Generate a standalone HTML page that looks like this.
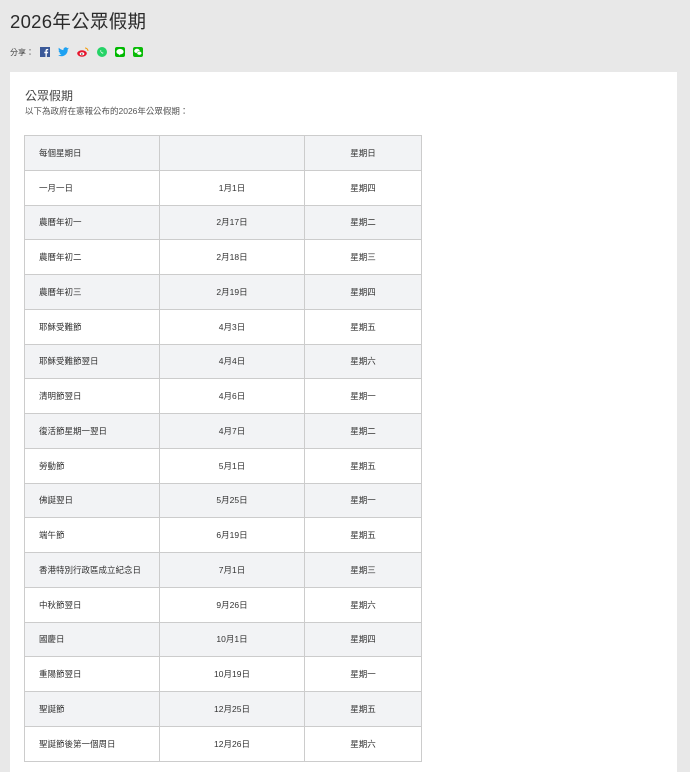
<!DOCTYPE html>
<html><head><meta charset="utf-8"><style>
*{margin:0;padding:0;box-sizing:border-box}
html,body{width:690px;height:763px;overflow:hidden;background:#e8e8e8;font-family:"Liberation Sans","Noto Sans CJK TC",sans-serif;color:#333}
h1{position:absolute;left:10px;top:8px;font-size:18.5px;font-weight:normal;color:#2a2a2a;letter-spacing:0.3px}
.share{position:absolute;left:10px;top:46px;font-size:8px;color:#444;display:flex;align-items:center;height:12px}
.share svg{margin-left:8px;display:block}
.card{position:absolute;left:10px;top:72px;width:667px;height:700px;background:#fff}
.h2{position:absolute;left:25px;top:87px;font-size:12px;color:#444}
.sub{position:absolute;left:25px;top:105px;font-size:8.5px;color:#555}
table{position:absolute;left:24px;top:135px;border-collapse:collapse;width:398px;font-size:8.5px;color:#333}
td{border:1px solid #ccc;height:34.75px;padding:0}
td:nth-child(1){width:135px;padding-left:14px}
td:nth-child(2){width:145px;text-align:center}
td:nth-child(3){text-align:center}
tr:nth-child(odd) td{background:#f2f3f5}
</style></head><body>
<h1>2026年公眾假期</h1>
<div class="share">分享：
<svg width="10" height="10" viewBox="0 0 10 10" style="margin-left:6px"><rect width="10" height="10" fill="#3b5998"/><path d="M6.8 10V6.2h1.2l.2-1.4H6.8v-.9c0-.4.1-.7.7-.7h.7V2a9 9 0 0 0-1-.1c-1 0-1.7.6-1.7 1.7v1.2H4.3v1.4h1.2V10z" fill="#fff"/></svg>
<svg width="11" height="10" viewBox="0 0 11 10"><path d="M11 1.5a4 4 0 0 1-1.3.4A2.2 2.2 0 0 0 10.7.6a4 4 0 0 1-1.4.5A2.2 2.2 0 0 0 5.5 3.1 6.3 6.3 0 0 1 .9.8a2.2 2.2 0 0 0 .7 3 2 2 0 0 1-1-.3 2.2 2.2 0 0 0 1.8 2.2 2 2 0 0 1-1 0 2.2 2.2 0 0 0 2 1.5A4.5 4.5 0 0 1 0 8.2 6.3 6.3 0 0 0 9.7 2.6v-.3A4.5 4.5 0 0 0 11 1.5z" fill="#1da1f2"/></svg>
<svg width="12" height="10" viewBox="0 0 12 10"><ellipse cx="5" cy="6.5" rx="4.8" ry="3.2" fill="#e6162d"/><ellipse cx="5" cy="6.8" rx="2.3" ry="1.6" fill="#fff"/><circle cx="4.8" cy="7" r=".8" fill="#333"/><path d="M8 1a3 3 0 0 1 3 3" stroke="#f39800" stroke-width="1" fill="none"/></svg>
<svg width="10" height="10" viewBox="0 0 10 10"><circle cx="5" cy="5" r="5" fill="#25d366"/><path d="M3.4 3.2c.3-.3.6 0 .7.3l.2.5-.3.4c.3.6.7 1 1.3 1.3l.4-.3.6.3c.2.2 0 .6-.3.8-.8.3-2.8-1.2-2.6-3.3z" fill="#fff"/></svg>
<svg width="10" height="10" viewBox="0 0 10 10"><rect width="10" height="10" rx="2" fill="#00b900"/><ellipse cx="5" cy="4.7" rx="3.6" ry="2.8" fill="#fff"/><path d="M3.6 7 4.5 8.6 5 7z" fill="#fff"/></svg>
<svg width="10" height="10" viewBox="0 0 10 10"><rect width="10" height="10" rx="2" fill="#09bb07"/><ellipse cx="4" cy="4" rx="2.8" ry="2.2" fill="#fff"/><ellipse cx="6.3" cy="6.2" rx="2.4" ry="1.9" fill="#fff" stroke="#09bb07" stroke-width=".5"/></svg>
</div>
<div class="card"></div>
<div class="h2">公眾假期</div>
<div class="sub">以下為政府在憲報公布的2026年公眾假期：</div>
<table>
<tr><td>每個星期日</td><td></td><td>星期日</td></tr>
<tr><td>一月一日</td><td>1月1日</td><td>星期四</td></tr>
<tr><td>農曆年初一</td><td>2月17日</td><td>星期二</td></tr>
<tr><td>農曆年初二</td><td>2月18日</td><td>星期三</td></tr>
<tr><td>農曆年初三</td><td>2月19日</td><td>星期四</td></tr>
<tr><td>耶穌受難節</td><td>4月3日</td><td>星期五</td></tr>
<tr><td>耶穌受難節翌日</td><td>4月4日</td><td>星期六</td></tr>
<tr><td>清明節翌日</td><td>4月6日</td><td>星期一</td></tr>
<tr><td>復活節星期一翌日</td><td>4月7日</td><td>星期二</td></tr>
<tr><td>勞動節</td><td>5月1日</td><td>星期五</td></tr>
<tr><td>佛誕翌日</td><td>5月25日</td><td>星期一</td></tr>
<tr><td>端午節</td><td>6月19日</td><td>星期五</td></tr>
<tr><td>香港特別行政區成立紀念日</td><td>7月1日</td><td>星期三</td></tr>
<tr><td>中秋節翌日</td><td>9月26日</td><td>星期六</td></tr>
<tr><td>國慶日</td><td>10月1日</td><td>星期四</td></tr>
<tr><td>重陽節翌日</td><td>10月19日</td><td>星期一</td></tr>
<tr><td>聖誕節</td><td>12月25日</td><td>星期五</td></tr>
<tr><td>聖誕節後第一個周日</td><td>12月26日</td><td>星期六</td></tr>
</table>
</body></html>
